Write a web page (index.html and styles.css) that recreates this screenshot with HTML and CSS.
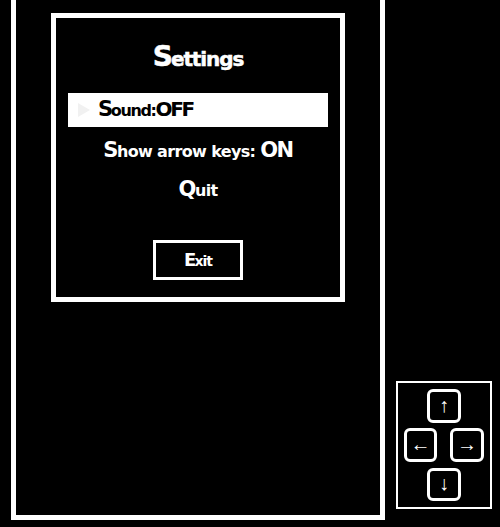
FILE: index.html
```
<!DOCTYPE html>
<html lang="en">
<head>
<meta charset="utf-8">
<title>Settings</title>
<link rel="stylesheet" href="styles.css">
</head>
<body>
<main class="board">
  <section class="dialog">
    <h1 class="title"><span class="cap">S</span>ettings</h1>
    <div class="option selected"><svg class="marker" viewBox="0 0 12 14"><path d="M0 0L12 7L0 14Z"/></svg><span class="label sound"><span class="cap">S</span>ound:<span class="cap value">OFF</span></span></div>
    <div class="option keys-option"><span class="label"><span class="cap">S</span>how arrow keys: <span class="cap value">ON</span></span></div>
    <div class="option quit"><span class="label"><span class="cap">Q</span>uit</span></div>
    <button class="exit"><span class="cap">E</span>xit</button>
  </section>
</main>
<aside class="keypad">
  <div class="key up">↑</div>
  <div class="key left">←</div>
  <div class="key right">→</div>
  <div class="key down">↓</div>
</aside>
</body>
</html>
```
FILE: styles.css
```
* { box-sizing: border-box; }
body {
  margin: 0;
  height: 527px;
  overflow: hidden;
  display: flex;
  align-items: flex-start;
  background: #000;
  color: #fff;
  font-family: "DejaVu Sans", sans-serif;
}
.board {
  width: 374px;
  height: 520px;
  margin-left: 11px;
  padding: 13px 35px 0;
  border: 5px solid #fff;
  border-top: 0;
}
.dialog {
  width: 294px;
  height: 289px;
  border: 5px solid #fff;
  padding: 0 12px;
  display: flex;
  flex-direction: column;
  align-items: center;
}
.title {
  margin: 22px 0 0;
  height: 53px;
  font-size: 20px;
  line-height: 34px;
  font-weight: bold;
  letter-spacing: -1.1px;
  white-space: nowrap;
  -webkit-text-stroke: 0.5px currentColor;
}
.title .cap { font-size: 28px; letter-spacing: -2px; }
.option {
  width: 260px;
  height: 34px;
  padding-top: 1px;
  display: flex;
  align-items: center;
  justify-content: center;
  font-size: 16px;
  line-height: 33px;
  font-weight: bold;
  white-space: nowrap;
}
.label { letter-spacing: -0.65px; }
.option .cap { font-size: 21px; letter-spacing: -1.5px; }
.selected {
  justify-content: flex-start;
  padding-top: 0;
  padding-left: 10px;
  background: #fff;
  color: #000;
}
.sound { letter-spacing: -1.4px; }
.selected .cap { letter-spacing: -2.3px; }
.selected .value { font-size: 20px; }
.marker { width: 12px; height: 14px; margin-right: 8px; fill: #f1f1f1; }
.keys-option { margin-top: 6px; }
.quit { margin-top: 5px; }
.exit {
  width: 90px;
  height: 40px;
  margin-top: 34px;
  padding: 1px 0 0;
  border: 3px solid #fff;
  background: #000;
  color: #fff;
  font: bold 14px/31px "DejaVu Sans", sans-serif;
  letter-spacing: -1px;
}
.exit .cap { font-size: 18px; letter-spacing: -2px; }
.keypad {
  width: 96px;
  height: 128px;
  margin: 381px 0 0 11px;
  border: 2px solid #fff;
  padding: 6px;
  display: grid;
  grid-template-columns: 23px 11px 12px 34px;
  grid-template-rows: 34px 35px 33px;
  row-gap: 5px;
}
.key {
  height: 34px;
  border: 3px solid #fff;
  border-radius: 6px;
  padding-bottom: 3px;
  display: flex;
  align-items: center;
  justify-content: center;
  font: 20px/24px "Liberation Sans", sans-serif;
}
.up, .down { grid-column: 2 / 5; width: 34px; }
.up { grid-row: 1; }
.left { grid-column: 1 / 3; grid-row: 2; width: 33px; }
.right { grid-column: 4; grid-row: 2; }
.down { grid-row: 3; height: 33px; }
```
